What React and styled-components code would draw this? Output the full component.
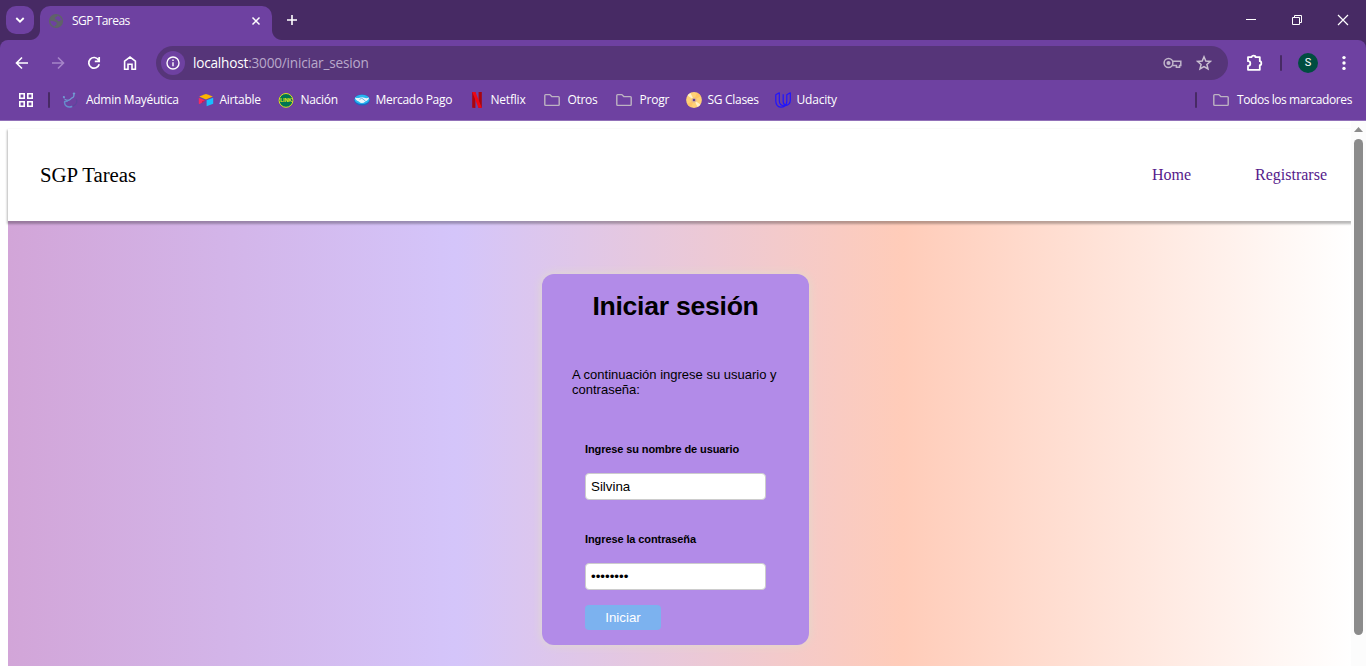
import React from 'react';
import styled, { createGlobalStyle } from 'styled-components';

const Global = createGlobalStyle`
  *, *::before, *::after { box-sizing: border-box; }
  html, body { margin: 0; height: 100%; overflow: hidden; background: #fff; }
`;

const Window = styled.div`
  width: 1366px;
  height: 666px;
  display: flex;
  flex-direction: column;
  overflow: hidden;
  font-family: 'Open Sans', 'Noto Sans', sans-serif;
  font-size: 12px;
  color: #fff;
`;

const TabStrip = styled.header`
  height: 40px;
  flex: none;
  display: flex;
  align-items: flex-start;
  background: #472a64;
  padding: 6px 0 0 6px;
`;

const TabSearch = styled.button`
  width: 28px;
  height: 28px;
  border: 0;
  border-radius: 10px;
  padding: 0;
  background: #6e41a1;
  display: grid;
  place-items: center;
`;

const Tab = styled.div`
  width: 232px;
  height: 34px;
  margin-left: 6px;
  padding: 0 10px 5px 8px;
  display: flex;
  align-items: center;
  background: #6e41a1;
  border-radius: 10px 10px 0 0;
  position: relative;
  &::before, &::after {
    content: '';
    position: absolute;
    bottom: 0;
    width: 10px;
    height: 10px;
  }
  &::before {
    left: -10px;
    background: radial-gradient(circle at 0 0, transparent 9.5px, #6e41a1 10.5px);
  }
  &::after {
    right: -10px;
    background: radial-gradient(circle at 100% 0, transparent 9.5px, #6e41a1 10.5px);
  }
`;

const Label = styled.span`
  white-space: nowrap;
  line-height: 16px;
  letter-spacing: ${(p) => p.$track || 0}px;
`;

const TabTitle = styled(Label)`
  margin-left: 8px;
  flex: 1;
`;

const NewTab = styled.div`
  margin: 8px 0 0 14px;
  height: 12px;
  display: flex;
`;

const WindowButtons = styled.div`
  margin-left: auto;
  display: flex;
  height: 28px;
  align-items: center;
  & > svg { width: 46px; height: 28px; }
`;

const ToolArea = styled.div`
  height: 81px;
  flex: none;
  background: #472a64;
`;

const ToolPanel = styled.div`
  height: 81px;
  background: #6e41a1;
  border-radius: 8px 8px 0 0;
  border-bottom: 1px solid #9271b9;
`;

const Toolbar = styled.div`
  height: 46px;
  padding: 0 14px 0 13px;
  display: flex;
  align-items: center;
`;

const NavIcons = styled.div`
  display: flex;
  gap: 18px;
  & > svg { width: 18px; height: 18px; }
`;

const AddressBar = styled.div`
  width: 1072px;
  height: 34px;
  margin-left: 17px;
  padding: 0 16px 0 5px;
  display: flex;
  align-items: center;
  border-radius: 17px;
  background: #563579;
`;

const InfoBadge = styled.span`
  width: 24px;
  height: 24px;
  border-radius: 50%;
  background: #6e41a1;
  display: grid;
  place-items: center;
`;

const Url = styled.span`
  flex: 1;
  margin-left: 8px;
  font-size: 13.6px;
  line-height: 18px;
  padding-bottom: 1px;
  letter-spacing: ${(p) => p.$track}px;
  color: #b9a9cb;
  white-space: nowrap;
  & > b { color: #fff; font-weight: 400; }
`;

const FieldActions = styled.div`
  display: flex;
  align-items: center;
  gap: 14px;
`;

const Actions = styled.div`
  display: flex;
  align-items: center;
  margin-left: 17px;
  flex: 1;
  & > :last-child { margin-left: auto; }
`;

const Divider = styled.span`
  width: 2px;
  height: 16px;
  border-radius: 1px;
  background: #472a64;
  margin: ${(p) => p.$margin};
`;

const Avatar = styled.span`
  width: 20px;
  height: 20px;
  border-radius: 50%;
  background: #004d40;
  display: grid;
  place-items: center;
  font: 400 11px/20px Roboto, sans-serif;
`;

const BookmarkBar = styled.nav`
  height: 28px;
  padding: 0 13px 0 19px;
  display: flex;
  align-items: center;
`;

const Bookmark = styled.div`
  width: ${(p) => p.$width}px;
  display: flex;
  align-items: center;
  gap: ${(p) => p.$gap || 7}px;
  flex: none;
  & > svg { width: 16px; height: 16px; flex: none; }
`;

const AllBookmarks = styled.div`
  margin-left: auto;
  display: flex;
  align-items: center;
`;

const Viewport = styled.div`
  flex: 1;
  min-height: 0;
  display: flex;
  background: #fff;
`;

const Page = styled.div`
  flex: 1;
  min-width: 0;
  padding: 8px 0 0 8px;
  display: flex;
  flex-direction: column;
  overflow: hidden;
  color: #000;
  font-family: 'Liberation Serif', serif;
`;

const SiteNav = styled.nav`
  height: 92px;
  flex: none;
  padding: 0 24px 0 32px;
  display: flex;
  align-items: center;
  background: #fff;
  box-shadow: 0 2px 2px 1px rgba(0, 0, 0, 0.27);
  position: relative;
`;

const Brand = styled.span`
  font-size: 20.8px;
  flex: 1;
`;

const SiteLinks = styled.div`
  display: flex;
  gap: 64px;
`;

const SiteLink = styled.a`
  font-size: 16px;
  color: #551a8b;
`;

const Backdrop = styled.main`
  flex: 1;
  background: linear-gradient(to right, #d2a5d8, #d4c5fa 33.3%, #ffccb9 66.6%, #fff);
  display: flex;
  justify-content: center;
  align-items: flex-start;
  padding: 53px 8px 0 0;
`;

const Card = styled.form`
  width: 267px;
  height: 371px;
  padding: 16px 30px 0;
  border-radius: 12px;
  background: #b28be8;
  box-shadow: 0 0 10px #dfdccb;
  font-family: 'Liberation Sans', sans-serif;
`;

const Title = styled.h1`
  margin: 0;
  font-size: 26.6px;
  letter-spacing: -0.27px;
  line-height: 32px;
  text-align: center;
  white-space: nowrap;
`;

const Intro = styled.p`
  margin: 45px 0 46px;
  font-size: 13px;
  line-height: 15px;
`;

const Field = styled.label`
  display: block;
  margin: 0 13px ${(p) => p.$after}px;
  font-size: 11px;
  letter-spacing: ${(p) => p.$track}px;
  font-weight: 700;
  line-height: 13px;
  white-space: nowrap;
`;

const Input = styled.input`
  display: block;
  width: 181px;
  height: 27px;
  margin-top: 17px;
  padding: 0 5px;
  border: 1px solid #ccc;
  border-radius: 4px;
  background: #fff;
  color: #000;
  font: 13.33px 'Liberation Sans', sans-serif;
  letter-spacing: 0;
  outline: 0;
`;

const Submit = styled.button`
  display: block;
  width: 76px;
  height: 25px;
  margin-left: 13px;
  border: 0;
  border-radius: 4px;
  padding: 0;
  background: #7cb2ef;
  color: #fff;
  font: 13.33px 'Liberation Sans', sans-serif;
`;

const Scrollbar = styled.div`
  width: 15px;
  background: #fcfcfc;
  display: flex;
  flex-direction: column;
  align-items: center;
  padding-top: 6px;
`;

const Thumb = styled.div`
  width: 9px;
  height: 496px;
  margin-top: 7px;
  border-radius: 5px;
  background: #8b8b8b;
`;

const Folder = () => (
  <svg viewBox="0 0 16 16" fill="none" stroke="#bdb3c2" strokeWidth="1.4">
    <path d="M.8 12.6V3.4q0-.8.8-.8h4.2l2 2h6.6q.8 0 .8.8v7.2q0 .8-.8.8H1.6q-.8 0-.8-.8z" />
  </svg>
);

const Mayeutica = () => (
  <svg viewBox="0 0 16 16" fill="none" strokeLinecap="round">
    <path d="M2.200 5v1M3 7.600c2 1.400 5 .9 6.500-1.400M9.500 6.200q3-1.200 2.400-3.600" stroke="#719bd2" strokeWidth="1.200" />
    <path d="M2.600 9.500c-.6 4 3 6.600 7.400 5M2.600 9.600q3 .4 3.400-1.400" stroke="#668dcc" strokeWidth="1.400" />
    <path d="M14.500 7.500c.8 2.800-.8 5.600-3.500 6.700" stroke="#5d459c" strokeWidth="1.400" />
    <circle cx="12" cy="1.600" r="1.200" fill="#719bd2" />
    <circle cx="1.800" cy="5" r="1" fill="#719bd2" />
  </svg>
);

const Airtable = () => (
  <svg viewBox="0 0 16 16">
    <path d="m1.2 4.600 6-2.400q.8-.3 1.600 0l6 2.400L8.500 7.200q-.6.2-1.200 0z" fill="#fcb400" />
    <path d="M8.600 8.200 15.200 5.700v6L8.600 14.300z" fill="#18bfff" />
    <path d="M.8 5.800 7.200 8.400 2.200 11.800q-1.400.6-1.400-.5z" fill="#f82b60" />
    <path d="M4.300 9.200 7.200 8.300 3.800 10.900z" fill="#ba1e45" />
  </svg>
);

const LinkText = styled.text`
  font: 700 5.4px 'Liberation Sans', sans-serif;
  fill: #e8ea12;
`;

const LinkLogo = () => (
  <svg viewBox="0 0 16 16">
    <circle cx="8" cy="8.400" r="6.900" fill="#007452" stroke="#d9e021" strokeWidth="1" />
    <LinkText x="8" y="10.400" textAnchor="middle" textLength="12">LINK</LinkText>
  </svg>
);

const MercadoPago = () => (
  <svg viewBox="0 0 16 16">
    <ellipse cx="8" cy="8" rx="7.900" ry="5.600" fill="#1769c5" />
    <ellipse cx="8" cy="7.400" rx="7.400" ry="4.700" fill="#28b5ef" />
    <path d="M1 5.600q2.800.9 4.800.2 2.200-.9 4.400 0 2.400.8 4.800-.2-.2 2.600-3.700 3.900-1.500 1.500-3.300 1.500-1.700 0-3.200-1.500Q1.200 8.200 1 5.600z" fill="#e9f4fb" />
    <path d="m5.600 7.400 2.200-1.200 3.800 3" fill="none" stroke="#5aa5db" strokeWidth=".8" />
  </svg>
);

const Netflix = () => (
  <svg viewBox="0 0 16 16">
    <path d="M3.200 0h3.200v16l-3.200-.2zM9.600 0h3.200v15.800l-3.200.2z" fill="#a9040d" />
    <path d="M3.200 0h3.200l6.400 15.800-3.200.2z" fill="#ee0713" />
  </svg>
);

const Disc = () => (
  <svg viewBox="0 0 16 16">
    <circle cx="8" cy="8" r="7.900" fill="#ffd176" />
    <path d="M8 8 1.500 3.400A8 8 0 0 1 4.400 1zM8 8l6.500 4.600a8 8 0 0 1-2.900 2.400z" fill="#fff0c5" />
    <path d="M8 8 11 .8A8 8 0 0 1 14.800 4zM8 8l-3 7.200A8 8 0 0 1 1.200 12z" fill="#ffc466" />
    <circle cx="8" cy="8" r="2.600" fill="#e3bc8b" />
    <circle cx="8" cy="8" r="1.300" fill="#60409a" />
  </svg>
);

const Udacity = () => (
  <svg viewBox="0 0 16 16" fill="none" stroke="#2015ff" strokeWidth="1.200" strokeLinejoin="round">
    <path d="M4.300.8.800 2.800v6.400c0 3.600 2.300 6 5.400 6 1.500 0 2.600-.5 3.400-1.200C6.400 13.800 4.300 12 4.300 8.800z" />
    <path d="M15.300.8l-3.500 2v6.800c0 2.200-1 3.700-2.400 4.200 3.700-.2 5.900-2.400 5.900-5.700zM8.200 2.200v7c0 2 1 3.500 2.300 3.900" />
  </svg>
);

const bookmarks = [
  { name: 'Admin Mayéutica', Icon: Mayeutica, width: 135.5, gap: 8, track: -0.28 },
  { name: 'Airtable', Icon: Airtable, width: 80, gap: 6, track: -0.3 },
  { name: 'Nación', Icon: LinkLogo, width: 76, track: -0.3 },
  { name: 'Mercado Pago', Icon: MercadoPago, width: 115, gap: 6, track: -0.3 },
  { name: 'Netflix', Icon: Netflix, width: 75, gap: 6, track: -0.2 },
  { name: 'Otros', Icon: Folder, width: 72, gap: 8, track: -0.3 },
  { name: 'Progr', Icon: Folder, width: 70, gap: 8, track: -0.2 },
  { name: 'SG Clases', Icon: Disc, width: 89, gap: 6, track: -0.3 },
  { name: 'Udacity', Icon: Udacity, width: 70, gap: 6, track: -0.2 },
];

export default function App() {
  return (
    <Window>
      <Global />
      <TabStrip>
        <TabSearch>
          <svg width="10" height="8" viewBox="0 0 10 8" fill="none" stroke="#fff" strokeWidth="1.800"><path d="m1.300 2 3.700 3.700L8.700 2" /></svg>
        </TabSearch>
        <Tab>
          <svg width="16" height="16" viewBox="0 0 16 16">
            <circle cx="8" cy="8" r="6.400" fill="#6e41a1" stroke="#5f6368" strokeWidth="1.400" />
            <path d="M2 7.400Q2.600 3 7.600 1.800l2 .4-.2 1.400-2.200.8v1.800l2 .3.600 1.800h2l.6-1.200 1.600.4-.4 3.300-3 3.200-2 .6-1.400-.8v-1.600l1.600-.8-.2-2-2-.8z" fill="#5f6368" />
          </svg>
          <TabTitle $track={-0.52}>SGP Tareas</TabTitle>
          <svg width="12" height="12" viewBox="0 0 12 12" stroke="#fff" strokeWidth="1.500"><path d="m2.500 2.500 7 7m0-7-7 7" /></svg>
        </Tab>
        <NewTab>
          <svg width="12" height="12" viewBox="0 0 12 12" stroke="#fff" strokeWidth="1.600"><path d="M6 1v10M1 6h10" /></svg>
        </NewTab>
        <WindowButtons>
          <svg viewBox="0 0 46 28" stroke="#fff"><path d="M18 13.500h10" /></svg>
          <svg viewBox="0 0 46 28" stroke="#fff" fill="none"><path d="M18.500 11.500h7v7h-7zM20.500 11.500v-2h7v7h-2" /></svg>
          <svg viewBox="0 0 46 28" stroke="#fff" strokeWidth="1.200"><path d="m18 9 10 10m0-10L18 19" /></svg>
        </WindowButtons>
      </TabStrip>
      <ToolArea>
        <ToolPanel>
          <Toolbar>
            <NavIcons>
              <svg viewBox="0 0 18 18" fill="none" stroke="#fff" strokeWidth="1.600"><path d="M15 9H4M9 3.500 3.500 9 9 14.500" /></svg>
              <svg viewBox="0 0 18 18" fill="none" stroke="#a585c8" strokeWidth="1.600"><path d="M3 9h11M9 3.500 14.500 9 9 14.500" /></svg>
              <svg viewBox="0 0 18 18" fill="none" stroke="#fff" strokeWidth="1.700"><path d="M13.600 6A5.300 5.300 0 1 0 14.200 10.200M14.200 3v4.300H9.800" /></svg>
              <svg viewBox="0 0 18 18" fill="none" stroke="#fff" strokeWidth="1.600"><path d="M3.600 15.200V7.200L9 3l5.400 4.200v8h-3.400V10.200H7v5z" /></svg>
            </NavIcons>
            <AddressBar>
              <InfoBadge>
                <svg width="14" height="14" viewBox="0 0 14 14" fill="none" stroke="#fff" strokeWidth="1.400"><circle cx="7" cy="7" r="6" /><path d="M7 6.300v4M7 3.500V5" /></svg>
              </InfoBadge>
              <Url $track={-0.2}><b>localhost</b>:3000/iniciar_sesion</Url>
              <FieldActions>
                <svg width="19" height="12" viewBox="0 0 19 12" fill="none" stroke="#c0b5ca" strokeWidth="1.500"><circle cx="5.500" cy="6" r="4.400" /><circle cx="5.500" cy="6" r="1.300" fill="#c0b5ca" /><path d="M9.600 4.200h8.200v4.300h-1.200v1.700h-3.200V8.500H9.300" /></svg>
                <svg width="16" height="16" viewBox="0 0 16 16" fill="none" stroke="#c9bfd1" strokeWidth="1.500"><path d="m8 1.800 1.800 4.200 4.600.4-3.500 3 1.100 4.500L8 11.500l-4 2.400 1.100-4.500-3.500-3L6.200 6z" /></svg>
              </FieldActions>
            </AddressBar>
            <Actions>
              <svg width="19" height="18" viewBox="0 0 19 18"><path d="M3 3.200h3.500a2 1.500 0 0 1 4 0H14.800v4a1.500 2 0 0 1 0 4v4.600H3v-4a2.300 2.300 0 0 0 0-4.600z" fill="none" stroke="#fff" strokeWidth="1.800" strokeLinejoin="round" /></svg>
              <Divider $margin="0 16px 0 16px" />
              <Avatar>S</Avatar>
              <svg width="16" height="16" viewBox="0 0 16 16" fill="#fff"><circle cx="8" cy="2.600" r="1.700" /><circle cx="8" cy="8" r="1.700" /><circle cx="8" cy="13.400" r="1.700" /></svg>
            </Actions>
          </Toolbar>
          <BookmarkBar>
            <svg width="14" height="14" viewBox="0 0 14 14" fill="none" stroke="#fff" strokeWidth="1.600"><path d="M.8.800h4.400v4.400H.8zM8.800.800h4.400v4.400H8.800zM.8 8.800h4.400v4.400H.8zM8.800 8.800h4.400v4.400H8.800z" /></svg>
            <Divider $margin="0 12px 0 15px" />
            {bookmarks.map(({ name, Icon, width, gap, track }) => (
              <Bookmark key={name} $width={width} $gap={gap}><Icon /><Label $track={track}>{name}</Label></Bookmark>
            ))}
            <AllBookmarks>
              <Divider $margin="0 16px 0 0" />
              <Bookmark $width={140} $gap={8}><Folder /><Label $track={-0.42}>Todos los marcadores</Label></Bookmark>
            </AllBookmarks>
          </BookmarkBar>
        </ToolPanel>
      </ToolArea>
      <Viewport>
        <Page>
          <SiteNav>
            <Brand>SGP Tareas</Brand>
            <SiteLinks><SiteLink>Home</SiteLink><SiteLink>Registrarse</SiteLink></SiteLinks>
          </SiteNav>
          <Backdrop>
            <Card>
              <Title>Iniciar sesión</Title>
              <Intro>A continuación ingrese su usuario y contraseña:</Intro>
              <Field $after={33} $track={-0.11}>Ingrese su nombre de usuario<Input defaultValue="Silvina" /></Field>
              <Field $after={15} $track={-0.1}>Ingrese la contraseña<Input type="password" defaultValue="password" /></Field>
              <Submit type="button">Iniciar</Submit>
            </Card>
          </Backdrop>
        </Page>
        <Scrollbar>
          <svg width="9" height="5" viewBox="0 0 9 5"><path d="M0 5 4.500 0 9 5z" fill="#8b8b8b" /></svg>
          <Thumb />
        </Scrollbar>
      </Viewport>
    </Window>
  );
}
